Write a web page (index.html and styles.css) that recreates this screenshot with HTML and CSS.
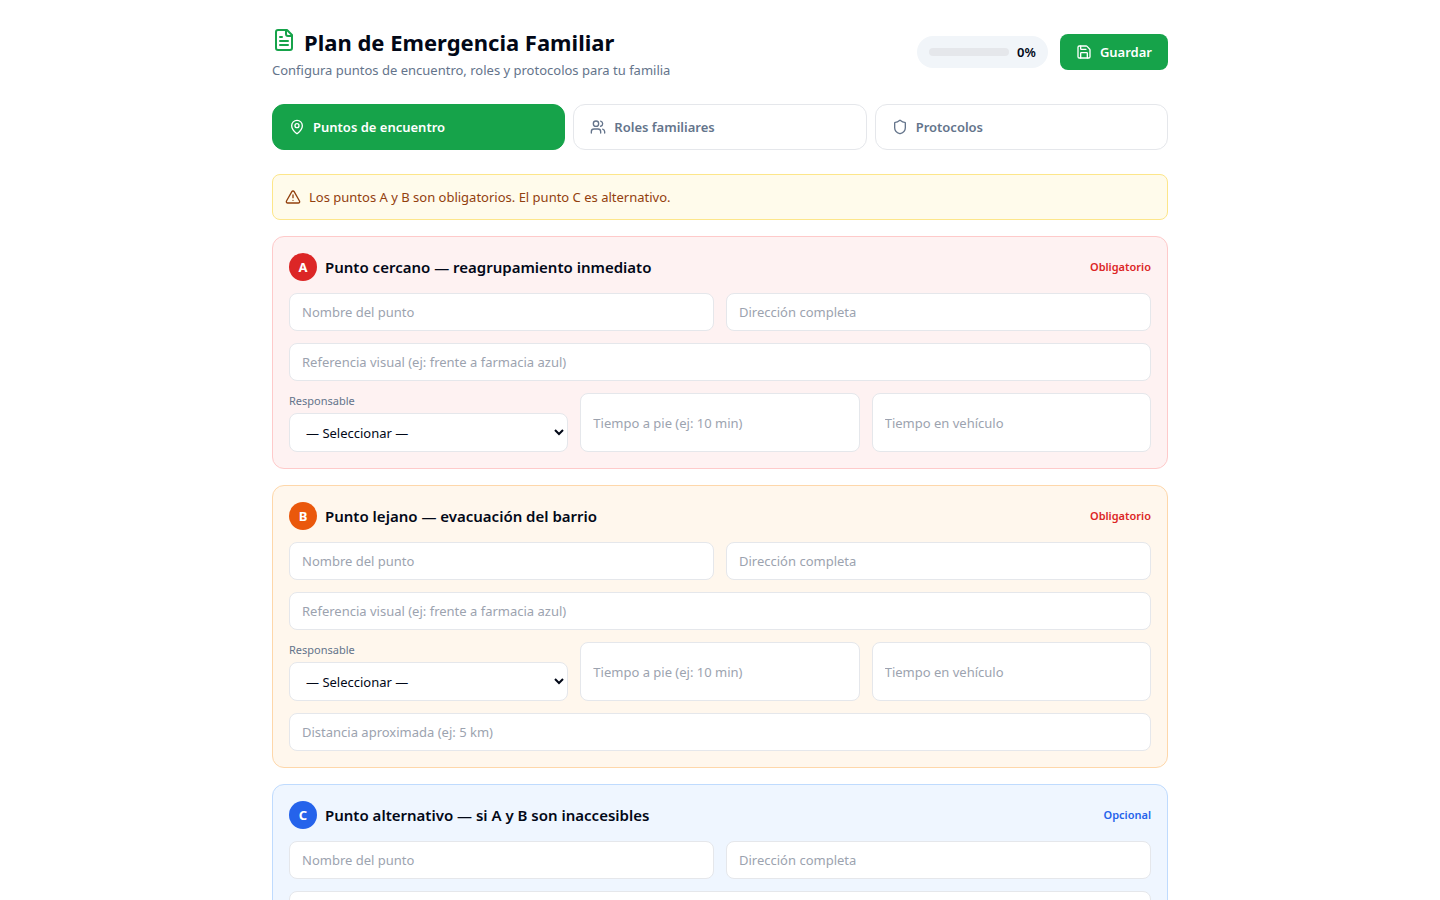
FILE: index.html
```html
<!DOCTYPE html>
<html lang="es">
<head>
  <meta charset="UTF-8" />
  <meta name="viewport" content="width=device-width, initial-scale=1.0"/>
  <title>Plan de Emergencia Familiar</title>
  <link rel="stylesheet" href="styles.css">
</head>
<body>
  <main class="container">
    <header class="page-header">
      <div>
        <h1>
          <svg class="icon icon-lg" viewBox="0 0 24 24"><path d="M15 2H6a2 2 0 0 0-2 2v16a2 2 0 0 0 2 2h12a2 2 0 0 0 2-2V7Z"/><path d="M14 2v4a2 2 0 0 0 2 2h4"/><path d="M10 9H8"/><path d="M16 13H8"/><path d="M16 17H8"/></svg>
          Plan de Emergencia Familiar
        </h1>
        <p class="subtitle">Configura puntos de encuentro, roles y protocolos para tu familia</p>
      </div>
      <div class="header-actions">
        <div class="progress-pill">
          <div class="progress-track"><div class="progress-bar"></div></div>
          <span>0%</span>
        </div>
        <button type="submit" class="btn-save" form="planForm">
          <svg class="icon" viewBox="0 0 24 24"><path d="M15.2 3a2 2 0 0 1 1.4.6l3.8 3.8a2 2 0 0 1 .6 1.4V19a2 2 0 0 1-2 2H5a2 2 0 0 1-2-2V5a2 2 0 0 1 2-2z"/><path d="M17 21v-7a1 1 0 0 0-1-1H8a1 1 0 0 0-1 1v7"/><path d="M7 3v4a1 1 0 0 0 1 1h7"/></svg>
          Guardar
        </button>
      </div>
    </header>

    <nav class="tabs">
      <button type="button" class="tab active">
        <svg class="icon" viewBox="0 0 24 24"><path d="M20 10c0 4.993-5.539 10.193-7.399 11.799a1 1 0 0 1-1.202 0C9.539 20.193 4 14.993 4 10a8 8 0 0 1 16 0"/><circle cx="12" cy="10" r="3"/></svg>
        Puntos de encuentro
      </button>
      <button type="button" class="tab">
        <svg class="icon" viewBox="0 0 24 24"><path d="M16 21v-2a4 4 0 0 0-4-4H6a4 4 0 0 0-4 4v2"/><circle cx="9" cy="7" r="4"/><path d="M22 21v-2a4 4 0 0 0-3-3.870"/><path d="M16 3.130a4 4 0 0 1 0 7.750"/></svg>
        Roles familiares
      </button>
      <button type="button" class="tab">
        <svg class="icon" viewBox="0 0 24 24"><path d="M20 13c0 5-3.500 7.500-7.660 8.950a1 1 0 0 1-.670-.010C7.500 20.500 4 18 4 13V6a1 1 0 0 1 1-1c2 0 4.500-1.200 6.240-2.720a1.170 1.170 0 0 1 1.520 0C14.510 3.810 17 5 19 5a1 1 0 0 1 1 1z"/></svg>
        Protocolos
      </button>
    </nav>

    <form id="planForm">
      <p class="alert">
        <svg class="icon" viewBox="0 0 24 24"><path d="m21.730 18-8-14a2 2 0 0 0-3.480 0l-8 14A2 2 0 0 0 4 21h16a2 2 0 0 0 1.730-3"/><path d="M12 9v4"/><path d="M12 17h.01"/></svg>
        Los puntos A y B son obligatorios. El punto C es alternativo.
      </p>

      <section class="card card-a">
        <div class="card-header">
          <span class="badge">A</span>
          <h2>Punto cercano — reagrupamiento inmediato</h2>
          <span class="tag">Obligatorio</span>
        </div>
        <div class="row cols-2">
          <input type="text" name="nombreA" placeholder="Nombre del punto" aria-label="Nombre del punto">
          <input type="text" name="direccionA" placeholder="Dirección completa" aria-label="Dirección completa">
        </div>
        <input type="text" name="referenciaA" placeholder="Referencia visual (ej: frente a farmacia azul)" aria-label="Referencia visual">
        <div class="row cols-3">
          <div class="field">
            <label for="responsableA">Responsable</label>
            <select id="responsableA" name="responsableA">
              <option value="">— Seleccionar —</option>
            </select>
          </div>
          <input type="text" name="pieA" placeholder="Tiempo a pie (ej: 10 min)" aria-label="Tiempo a pie">
          <input type="text" name="vehiculoA" placeholder="Tiempo en vehículo" aria-label="Tiempo en vehículo">
        </div>
      </section>

      <section class="card card-b">
        <div class="card-header">
          <span class="badge">B</span>
          <h2>Punto lejano — evacuación del barrio</h2>
          <span class="tag">Obligatorio</span>
        </div>
        <div class="row cols-2">
          <input type="text" name="nombreB" placeholder="Nombre del punto" aria-label="Nombre del punto">
          <input type="text" name="direccionB" placeholder="Dirección completa" aria-label="Dirección completa">
        </div>
        <input type="text" name="referenciaB" placeholder="Referencia visual (ej: frente a farmacia azul)" aria-label="Referencia visual">
        <div class="row cols-3">
          <div class="field">
            <label for="responsableB">Responsable</label>
            <select id="responsableB" name="responsableB">
              <option value="">— Seleccionar —</option>
            </select>
          </div>
          <input type="text" name="pieB" placeholder="Tiempo a pie (ej: 10 min)" aria-label="Tiempo a pie">
          <input type="text" name="vehiculoB" placeholder="Tiempo en vehículo" aria-label="Tiempo en vehículo">
        </div>
        <input type="text" name="distanciaB" placeholder="Distancia aproximada (ej: 5 km)" aria-label="Distancia aproximada">
      </section>

      <section class="card card-c">
        <div class="card-header">
          <span class="badge">C</span>
          <h2>Punto alternativo — si A y B son inaccesibles</h2>
          <span class="tag">Opcional</span>
        </div>
        <div class="row cols-2">
          <input type="text" name="nombreC" placeholder="Nombre del punto" aria-label="Nombre del punto">
          <input type="text" name="direccionC" placeholder="Dirección completa" aria-label="Dirección completa">
        </div>
        <input type="text" name="referenciaC" placeholder="Referencia visual (ej: frente a farmacia azul)" aria-label="Referencia visual">
      </section>
    </form>
  </main>
</body>
</html>
```
FILE: styles.css
```css
:root {
  --text-color: #020817;
  --muted-color: #64748b;
  --border-color: #e5e7eb;
  --green: #16a34a;
  --red: #dc2626;
  --blue: #2563eb;
}

* {
  box-sizing: border-box;
}

body {
  margin: 0;
  background-color: #fff;
  color: var(--text-color);
  font-family: 'Segoe UI', 'Noto Sans', 'Open Sans', sans-serif;
  font-size: 13px;
  line-height: 20px;
}

h1, h2, p {
  margin: 0;
}

button, input, select {
  font: inherit;
  color: inherit;
}

.container {
  max-width: 928px;
  margin: 0 auto;
  padding: 24px 16px;
}

.icon {
  width: 16px;
  height: 16px;
  flex-shrink: 0;
  fill: none;
  stroke: currentColor;
  stroke-width: 2;
  stroke-linecap: round;
  stroke-linejoin: round;
}

.icon-lg {
  width: 24px;
  height: 24px;
  margin-top: 4px;
  color: var(--green);
}

/* Header */
.page-header {
  display: flex;
  flex-wrap: wrap;
  align-items: center;
  justify-content: space-between;
  gap: 12px;
  margin-bottom: 24px;
}

h1 {
  display: flex;
  align-items: flex-start;
  gap: 8px;
  font-size: 22px;
  line-height: 36px;
  font-weight: 700;
}

.subtitle {
  color: var(--muted-color);
}

.header-actions {
  display: flex;
  align-items: center;
  gap: 12px;
}

.progress-pill {
  display: flex;
  align-items: center;
  gap: 8px;
  padding: 6px 12px;
  border-radius: 16px;
  background-color: #f1f5f9;
  font-weight: 600;
}

.progress-track {
  width: 80px;
  height: 8px;
  border-radius: 4px;
  background-color: var(--border-color);
  overflow: hidden;
}

.progress-bar {
  width: 0;
  height: 100%;
  background-color: var(--green);
}

.btn-save {
  display: flex;
  align-items: center;
  gap: 8px;
  padding: 8px 16px;
  border: none;
  border-radius: 8px;
  background-color: var(--green);
  color: #fff;
  font-weight: 600;
  cursor: pointer;
}

.btn-save:hover {
  background-color: #15803d;
}

/* Tabs */
.tabs {
  display: grid;
  grid-template-columns: repeat(3, 1fr);
  gap: 8px;
  margin-bottom: 24px;
}

.tab {
  display: flex;
  align-items: center;
  gap: 8px;
  padding: 12px 16px;
  border: 1px solid var(--border-color);
  border-radius: 12px;
  background-color: #fff;
  color: var(--muted-color);
  font-weight: 600;
  cursor: pointer;
}

.tab.active {
  border-color: var(--green);
  background-color: var(--green);
  color: #fff;
}

/* Form */
form {
  display: flex;
  flex-direction: column;
  gap: 16px;
}

.alert {
  display: flex;
  align-items: center;
  gap: 8px;
  padding: 12px;
  border: 1px solid #fde68a;
  border-radius: 8px;
  background-color: #fffbeb;
  color: #92400e;
}

.card {
  display: flex;
  flex-direction: column;
  gap: 12px;
  padding: 16px;
  border: 1px solid;
  border-radius: 12px;
}

.card-a {
  border-color: #fecaca;
  background-color: #fef2f2;
}

.card-b {
  border-color: #fed7aa;
  background-color: #fff7ed;
}

.card-c {
  border-color: #bfdbfe;
  background-color: #eff6ff;
}

.card-header {
  display: flex;
  align-items: center;
  gap: 8px;
}

.badge {
  display: flex;
  align-items: center;
  justify-content: center;
  width: 28px;
  height: 28px;
  border-radius: 50%;
  background-color: var(--red);
  color: #fff;
  font-weight: 700;
}

.card-b .badge {
  background-color: #ea580c;
}

.card-c .badge {
  background-color: var(--blue);
}

h2 {
  font-size: 15px;
  line-height: 24px;
  font-weight: 600;
}

.tag {
  margin-left: auto;
  font-size: 11px;
  line-height: 16px;
  font-weight: 600;
  color: var(--red);
}

.card-c .tag {
  color: var(--blue);
}

.row {
  display: grid;
  gap: 12px;
}

.cols-2 {
  grid-template-columns: repeat(2, 1fr);
}

.cols-3 {
  grid-template-columns: repeat(3, 1fr);
}

.field {
  display: flex;
  flex-direction: column;
  gap: 4px;
}

.field label {
  font-size: 11px;
  line-height: 16px;
  color: var(--muted-color);
}

input, select {
  width: 100%;
  min-width: 0;
  min-height: 38px;
  padding: 8px 12px;
  border: 1px solid var(--border-color);
  border-radius: 8px;
  background-color: #fff;
}

select {
  height: 39px;
}

input::placeholder {
  color: #9ca3af;
}

input:focus, select:focus {
  outline: 2px solid var(--green);
}

@media (max-width: 640px) {
  .tabs, .cols-2, .cols-3 {
    grid-template-columns: 1fr;
  }
}
```
